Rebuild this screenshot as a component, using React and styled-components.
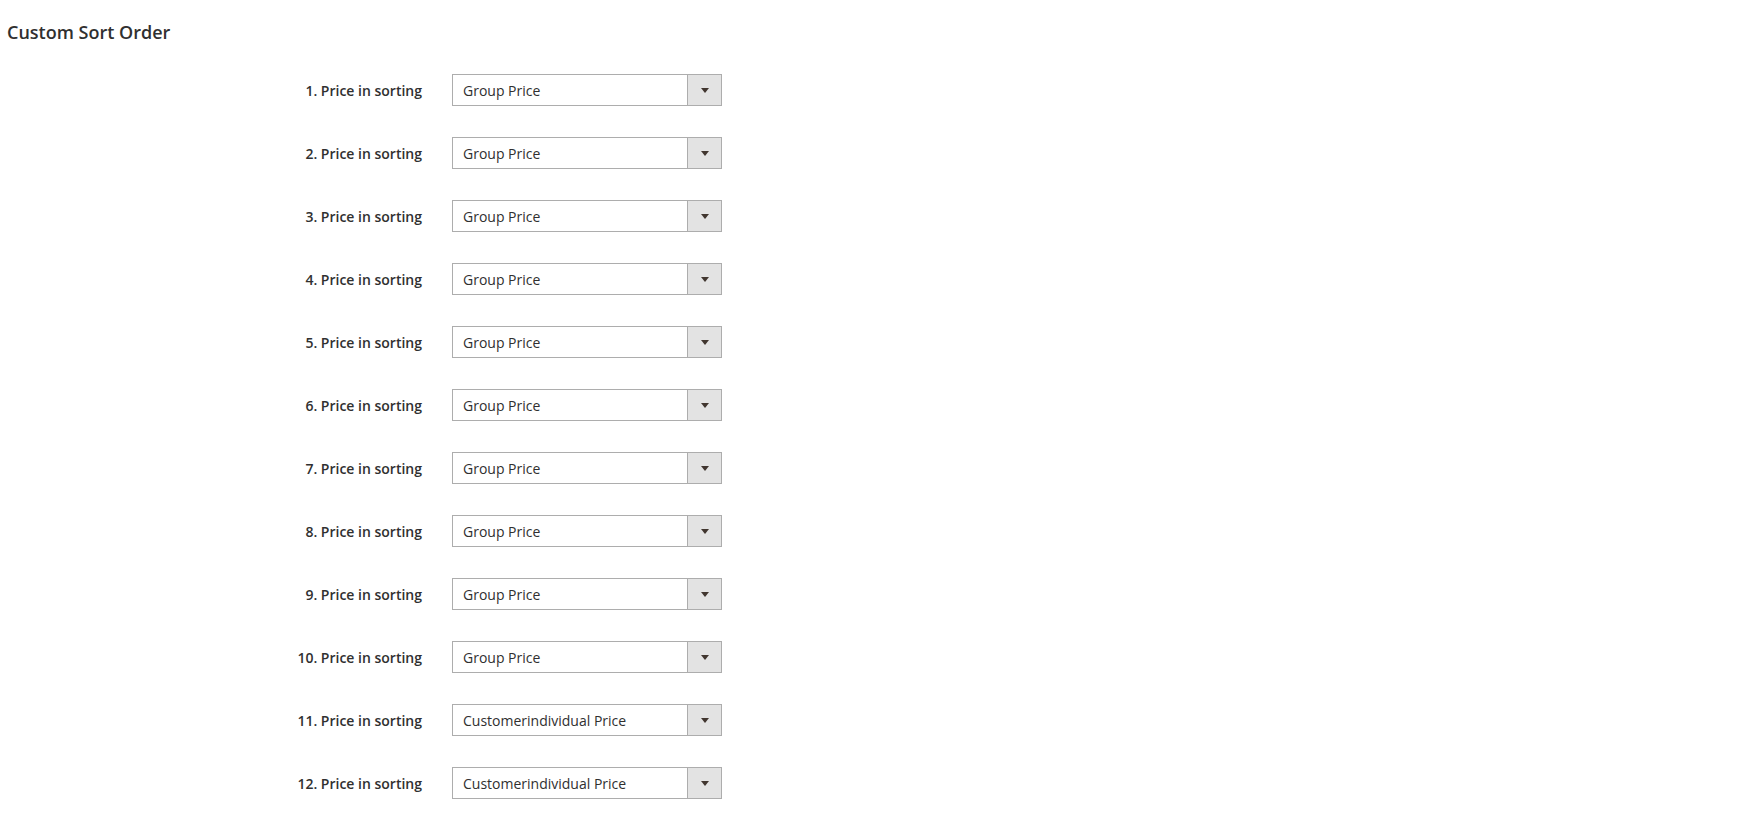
import React from "react"
import styled, { createGlobalStyle } from "styled-components"

const Global = createGlobalStyle`
    html, body {
        margin: 0;
        padding: 0;
        background: #ffffff;
        font-family: "Open Sans", "Liberation Sans", sans-serif;
        color: #303030;
    }
`

const Page = styled.div`
    padding: 20px 7px 0 7px;
`

const Title = styled.h2`
    margin: 0;
    font-size: 18px;
    font-weight: 600;
    line-height: 24px;
    color: #303030;
`

const Fields = styled.div`
    display: grid;
    grid-template-columns: 415px 270px;
    column-gap: 30px;
    row-gap: 31px;
    margin-top: 30px;
`

const Label = styled.label`
    display: flex;
    align-items: center;
    justify-content: flex-end;
    font-size: 14px;
    font-weight: 600;
    color: #303030;
    height: 32px;
`

const Select = styled.div`
    display: flex;
    height: 32px;
    box-sizing: border-box;
    border: 1px solid #adadad;
    background: #ffffff;
`

const Value = styled.span`
    flex: 1;
    display: flex;
    align-items: center;
    padding-left: 10px;
    font-size: 14px;
    color: #303030;
`

const Arrow = styled.span`
    width: 33px;
    display: flex;
    align-items: center;
    justify-content: center;
    background: #e3e3e3;
    border-left: 1px solid #adadad;

    &::after {
        content: "";
        border-left: 4.5px solid transparent;
        border-right: 4.5px solid transparent;
        border-top: 5px solid #41362f;
    }
`

const rows = [
    "Group Price", "Group Price", "Group Price", "Group Price", "Group Price",
    "Group Price", "Group Price", "Group Price", "Group Price", "Group Price",
    "Customerindividual Price", "Customerindividual Price",
]

export default function App(){
    return(
        <Page>
            <Global />
            <Title>Custom Sort Order</Title>
            <Fields>
                {rows.map((value, i) => (
                    <React.Fragment key={i}>
                        <Label>{i + 1}. Price in sorting</Label>
                        <Select>
                            <Value>{value}</Value>
                            <Arrow />
                        </Select>
                    </React.Fragment>
                ))}
            </Fields>
        </Page>
    )
}
